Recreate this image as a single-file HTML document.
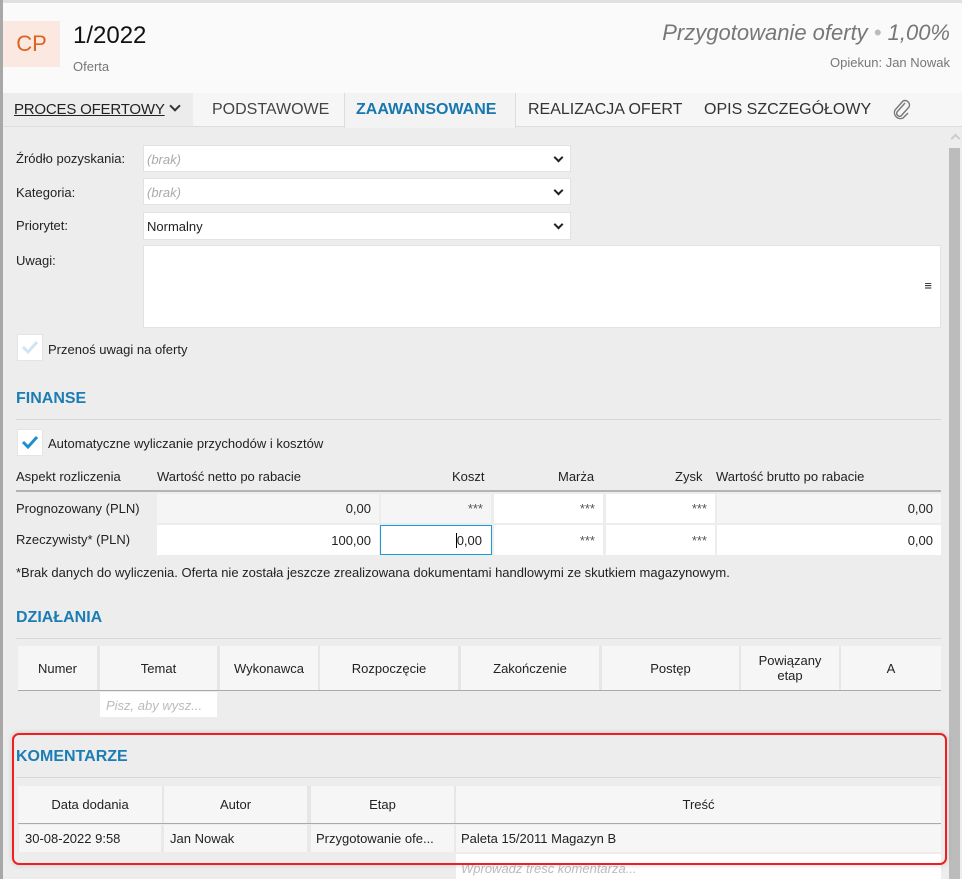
<!DOCTYPE html>
<html><head><meta charset="utf-8"><style>
*{box-sizing:border-box;margin:0;padding:0}
body{width:962px;height:879px;overflow:hidden;background:#ededed;font-family:"Liberation Sans",sans-serif;font-size:13px;color:#222;position:relative}
.a{position:absolute;white-space:nowrap}
.box{position:absolute;background:#fff}
.sel{position:absolute;background:#fff;border:1px solid #e2e2e2}
.chev{position:absolute;right:8px;top:8px;width:7px;height:7px;border-right:2px solid #222;border-bottom:2px solid #222;transform:rotate(45deg)}
.h{position:absolute;font-weight:bold;color:#1b7db4;font-size:16px}
.line{position:absolute;height:1px;background:#d6d6d6}
.th{position:absolute;background:#f6f6f6;text-align:center;display:flex;align-items:center;justify-content:center;line-height:15px}
.cell{position:absolute;display:flex;align-items:center;justify-content:flex-end;padding-right:8px}
</style></head><body>
<div class="a" style="left:0;top:0;width:962px;height:3px;background:#e0e0e0"></div>
<div class="a" style="left:3px;top:3px;width:959px;height:90px;background:#fafafa"></div>
<div class="a" style="left:0;top:0;width:3px;height:879px;background:#a8a8a8"></div>
<div class="a" style="left:3px;top:21px;width:57px;height:46px;background:#fae8e1;color:#dd6320;font-size:22px;text-align:center;line-height:46px">CP</div>
<div class="a" style="left:73px;top:22px;font-size:24px;color:#111">1/2022</div>
<div class="a" style="left:73px;top:59px;color:#777">Oferta</div>
<div class="a" style="right:12px;top:20px;font-size:22px;font-style:italic;color:#777">Przygotowanie oferty <span style="color:#bbb">•</span> 1,00%</div>
<div class="a" style="right:12px;top:55px;color:#777">Opiekun: Jan Nowak</div>
<!-- tabs -->
<div class="a" style="left:3px;top:93px;width:959px;height:34px;background:#f6f6f6;border-bottom:1px solid #ddd"></div>
<div class="a" style="left:3px;top:93px;width:190px;height:33px;background:#ececec"></div>
<div class="a" style="left:14px;top:101px;font-size:15px;letter-spacing:-0.2px;color:#222;text-decoration:underline">PROCES OFERTOWY</div>
<div class="a" style="left:171px;top:102px;width:8px;height:8px;border-right:2px solid #333;border-bottom:2px solid #333;transform:rotate(45deg)"></div>
<div class="a" style="left:212px;top:101px;font-size:16px;color:#444">PODSTAWOWE</div>
<div class="a" style="left:344px;top:93px;width:172px;height:35px;background:#f3f3f3;border-left:1px solid #ddd;border-right:1px solid #ddd"></div>
<div class="a" style="left:356px;top:101px;font-size:16px;color:#1877ae;font-weight:bold">ZAAWANSOWANE</div>
<div class="a" style="left:528px;top:101px;font-size:16px;color:#333">REALIZACJA OFERT</div>
<div class="a" style="left:704px;top:101px;font-size:16px;color:#333">OPIS SZCZEGÓŁOWY</div>
<svg class="a" style="left:890px;top:97px" width="22" height="24" viewBox="0 0 22 24"><path d="M15 6 L7 15 a3 3 0 0 0 4 4 L19 10 a4.5 4.5 0 0 0-6-6 L5 13 a6 6 0 0 0 8 8 L18 16" fill="none" stroke="#777" stroke-width="1.4"/></svg>
<!-- scrollbar -->
<div class="a" style="left:947px;top:128px;width:15px;height:751px;background:#ededed"></div>
<div class="a" style="left:949px;top:148px;width:11px;height:731px;background:#bcbcbc"></div>
<div class="a" style="left:952px;top:135px;width:7px;height:7px;border-left:2px solid #ccc;border-top:2px solid #ccc;transform:rotate(45deg)"></div>
<!-- form -->
<div class="a" style="left:16px;top:151px">Źródło pozyskania:</div>
<div class="sel" style="left:143px;top:145px;width:428px;height:27px"><span class="a" style="left:3px;top:6px;color:#aaa;font-style:italic">(brak)</span><div class="chev"></div></div>
<div class="a" style="left:16px;top:185px">Kategoria:</div>
<div class="sel" style="left:143px;top:178px;width:428px;height:27px"><span class="a" style="left:3px;top:6px;color:#aaa;font-style:italic">(brak)</span><div class="chev"></div></div>
<div class="a" style="left:16px;top:218px">Priorytet:</div>
<div class="sel" style="left:143px;top:212px;width:428px;height:28px"><span class="a" style="left:3px;top:6px">Normalny</span><div class="chev"></div></div>
<div class="a" style="left:16px;top:253px">Uwagi:</div>
<div class="sel" style="left:143px;top:245px;width:798px;height:83px"><span class="a" style="right:8px;top:32px;font-size:13px">≡</span></div>
<div class="box" style="left:17px;top:334px;width:26px;height:27px;border:1px solid #e4e4e4"></div>
<svg class="a" style="left:21px;top:339px" width="18" height="16"><path d="M2 8 L7 13 L16 3" fill="none" stroke="#cfe6f2" stroke-width="3"/></svg>
<div class="a" style="left:48px;top:342px">Przenoś uwagi na oferty</div>
<div class="h" style="left:16px;top:390px">FINANSE</div>
<div class="line" style="left:16px;top:419px;width:925px"></div>
<div class="box" style="left:17px;top:429px;width:26px;height:27px;border:1px solid #e4e4e4"></div>
<svg class="a" style="left:21px;top:434px" width="18" height="16"><path d="M2 8 L7 13 L16 3" fill="none" stroke="#1d8fd0" stroke-width="3"/></svg>
<div class="a" style="left:48px;top:436px">Automatyczne wyliczanie przychodów i kosztów</div>
<div class="a" style="left:16px;top:469px">Aspekt rozliczenia</div>
<div class="a" style="left:157px;top:469px">Wartość netto po rabacie</div>
<div class="a" style="left:452px;top:469px">Koszt</div>
<div class="a" style="left:558px;top:469px">Marża</div>
<div class="a" style="left:675px;top:469px">Zysk</div>
<div class="a" style="left:716px;top:469px">Wartość brutto po rabacie</div>
<div class="a" style="left:16px;top:490px;width:925px;height:2px;background:#b4b4b4"></div>
<div class="a" style="left:16px;top:501px">Prognozowany (PLN)</div>
<div class="a" style="left:16px;top:532px">Rzeczywisty* (PLN)</div>
<div class="cell" style="left:157px;top:494px;width:222px;height:29px;background:#f5f5f5">0,00</div>
<div class="cell" style="left:381px;top:494px;width:110px;height:29px;background:#f5f5f5;color:#555">***</div>
<div class="cell" style="left:494px;top:494px;width:109px;height:29px;background:#fff;color:#555">***</div>
<div class="cell" style="left:606px;top:494px;width:109px;height:29px;background:#fff;color:#555">***</div>
<div class="cell" style="left:717px;top:494px;width:224px;height:29px;background:#f5f5f5">0,00</div>
<div class="cell" style="left:157px;top:525px;width:222px;height:30px;background:#fff">100,00</div>
<div class="cell" style="left:380px;top:525px;width:112px;height:30px;background:#fff;border:1px solid #1a9ad9;padding-right:9px"><span style="border-left:1px solid #000">0,00</span></div>
<div class="cell" style="left:494px;top:525px;width:109px;height:30px;background:#fff;color:#555">***</div>
<div class="cell" style="left:606px;top:525px;width:109px;height:30px;background:#fff;color:#555">***</div>
<div class="cell" style="left:717px;top:525px;width:224px;height:30px;background:#fff">0,00</div>
<div class="a" style="left:16px;top:565px">*Brak danych do wyliczenia. Oferta nie została jeszcze zrealizowana dokumentami handlowymi ze skutkiem magazynowym.</div>
<div class="h" style="left:16px;top:609px">DZIAŁANIA</div>
<div class="line" style="left:16px;top:638px;width:925px"></div>
<div class="a" style="left:18px;top:646px;width:923px;height:45px;background:#e6e6e6;border-bottom:1px solid #aaa"></div>
<div class="th" style="left:18px;top:646px;width:79px;height:44px">Numer</div>
<div class="th" style="left:100px;top:646px;width:117px;height:44px">Temat</div>
<div class="th" style="left:220px;top:646px;width:98px;height:44px">Wykonawca</div>
<div class="th" style="left:320px;top:646px;width:138px;height:44px">Rozpoczęcie</div>
<div class="th" style="left:461px;top:646px;width:138px;height:44px">Zakończenie</div>
<div class="th" style="left:602px;top:646px;width:137px;height:44px">Postęp</div>
<div class="th" style="left:741px;top:646px;width:98px;height:44px">Powiązany<br>etap</div>
<div class="th" style="left:841px;top:646px;width:100px;height:44px">A</div>
<div class="box" style="left:100px;top:692px;width:117px;height:25px"><span class="a" style="left:6px;top:6px;color:#bbb;font-style:italic">Pisz, aby wysz...</span></div>
<!-- komentarze -->
<div class="h" style="left:16px;top:748px">KOMENTARZE</div>
<div class="line" style="left:16px;top:777px;width:925px"></div>
<div class="a" style="left:18px;top:786px;width:923px;height:38px;background:#e6e6e6;border-bottom:1px solid #aaa"></div>
<div class="th" style="left:18px;top:786px;width:144px;height:37px">Data dodania</div>
<div class="th" style="left:164px;top:786px;width:143px;height:37px">Autor</div>
<div class="th" style="left:311px;top:786px;width:143px;height:37px">Etap</div>
<div class="th" style="left:456px;top:786px;width:485px;height:37px">Treść</div>
<div class="a" style="left:18px;top:825px;width:923px;height:27px;background:#e9e9e9"></div>
<div class="a" style="left:19px;top:825px;width:142px;height:27px;background:#f6f6f6;padding:6px 0 0 6px">30-08-2022 9:58</div>
<div class="a" style="left:164px;top:825px;width:143px;height:27px;background:#f6f6f6;padding:6px 0 0 6px">Jan Nowak</div>
<div class="a" style="left:311px;top:825px;width:143px;height:27px;background:#f6f6f6;padding:6px 0 0 5px">Przygotowanie ofe...</div>
<div class="a" style="left:456px;top:825px;width:485px;height:27px;background:#f6f6f6;padding:6px 0 0 5px">Paleta 15/2011 Magazyn B</div>
<div class="box" style="left:456px;top:854px;width:485px;height:25px"><span class="a" style="left:5px;top:7px;color:#bbb;font-style:italic">Wprowadź treść komentarza...</span></div>
<div class="a" style="left:12px;top:733px;width:935px;height:132px;border:2px solid #f01e1e;border-radius:7px;box-shadow:0 0 6px rgba(0,0,0,.15)"></div>
</body></html>
